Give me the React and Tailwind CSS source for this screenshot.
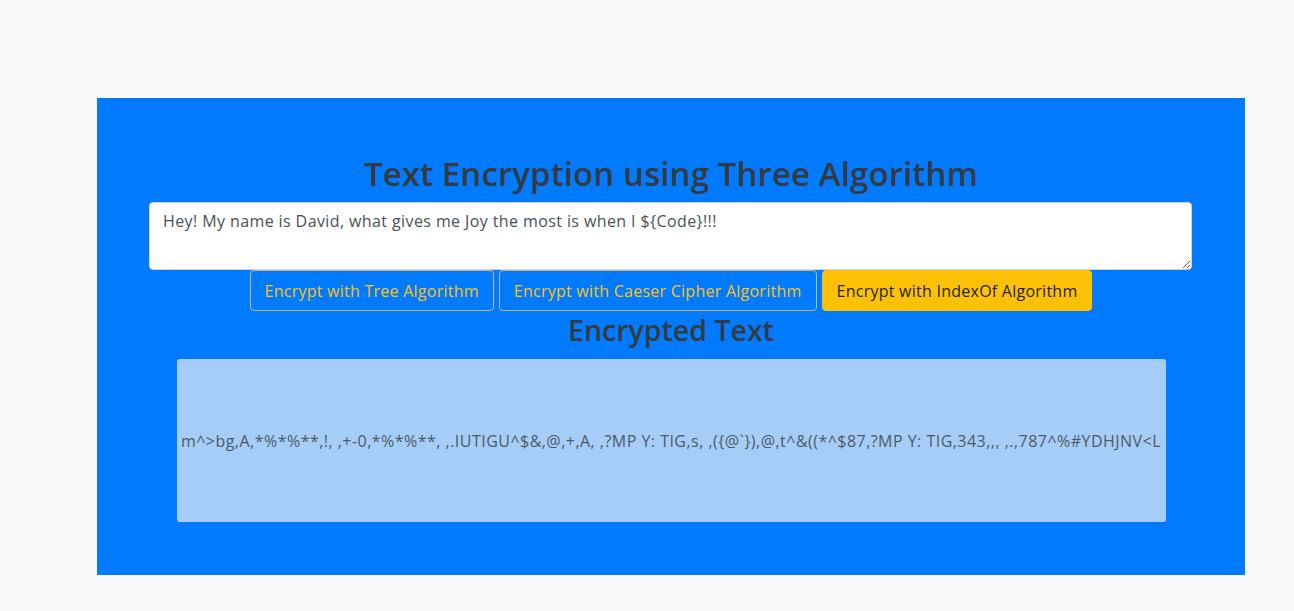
import React, { useState } from 'react';

const SAMPLE = 'Hey! My name is David, what gives me Joy the most is when I ${Code}!!!';
const OUTPUT = 'm^>bg,A,*%*%**,!, ,+-0,*%*%**, ,.IUTIGU^$&,@,+,A, ,?MP Y: TIG,s, ,({@`}),@,t^&((*^$87,?MP Y: TIG,343,,, ,.,787^%#YDHJNV<L';

const App = () => {
  const [text, setText] = useState(SAMPLE);

  return (
    <div className="min-h-[611px] w-full bg-[#f8f9fa] pt-[98px] pl-[97px] font-['Open_Sans',_'Liberation_Sans',_sans-serif]">
      <div className="w-[1148px] h-[477px] bg-[#007bff] flex flex-col items-center pt-[57px]">
        {/* Title */}
        <h1 className="text-[33px] leading-[38px] font-semibold text-[#343a40] tracking-[0.1px]">
          Text Encryption using Three Algorithm
        </h1>

        {/* Input */}
        <textarea
          value={text}
          onChange={e => setText(e.target.value)}
          className="mt-[9px] mr-[1px] w-[1043px] h-[68px] bg-white rounded-[4px] border border-[#ced4da] px-[13px] py-[6px] text-[16px] leading-[24px] text-[#495057] tracking-[0.4px] resize-y outline-none"
        />

        {/* Buttons */}
        <div className="flex gap-[5px]">
          <button className="h-[41px] px-[14px] rounded-[4px] border border-[#bdb98e] text-[#ffc107] text-[16px] tracking-[0.25px]">
            Encrypt with Tree Algorithm
          </button>
          <button className="h-[41px] px-[14px] rounded-[4px] border border-[#bdb98e] text-[#ffc107] text-[16px] tracking-[0.25px]">
            Encrypt with Caeser Cipher Algorithm
          </button>
          <button className="h-[41px] px-[14px] rounded-[4px] border border-[#ffc107] bg-[#ffc107] text-[#212529] text-[16px] tracking-[0.25px]">
            Encrypt with IndexOf Algorithm
          </button>
        </div>

        <h3 className="mt-[2px] text-[28.5px] leading-[34px] font-semibold text-[#343a40]">
          Encrypted Text
        </h3>

        {/* Output */}
        <div className="mt-[12px] w-[989px] h-[163px] bg-[#a6cdf7] rounded-[3px] flex items-center justify-center overflow-hidden">
          <p className="whitespace-nowrap text-[16px] text-[#4d5a66] tracking-[0.47px]">{OUTPUT}</p>
        </div>
      </div>
    </div>
  );
};

export default App;
